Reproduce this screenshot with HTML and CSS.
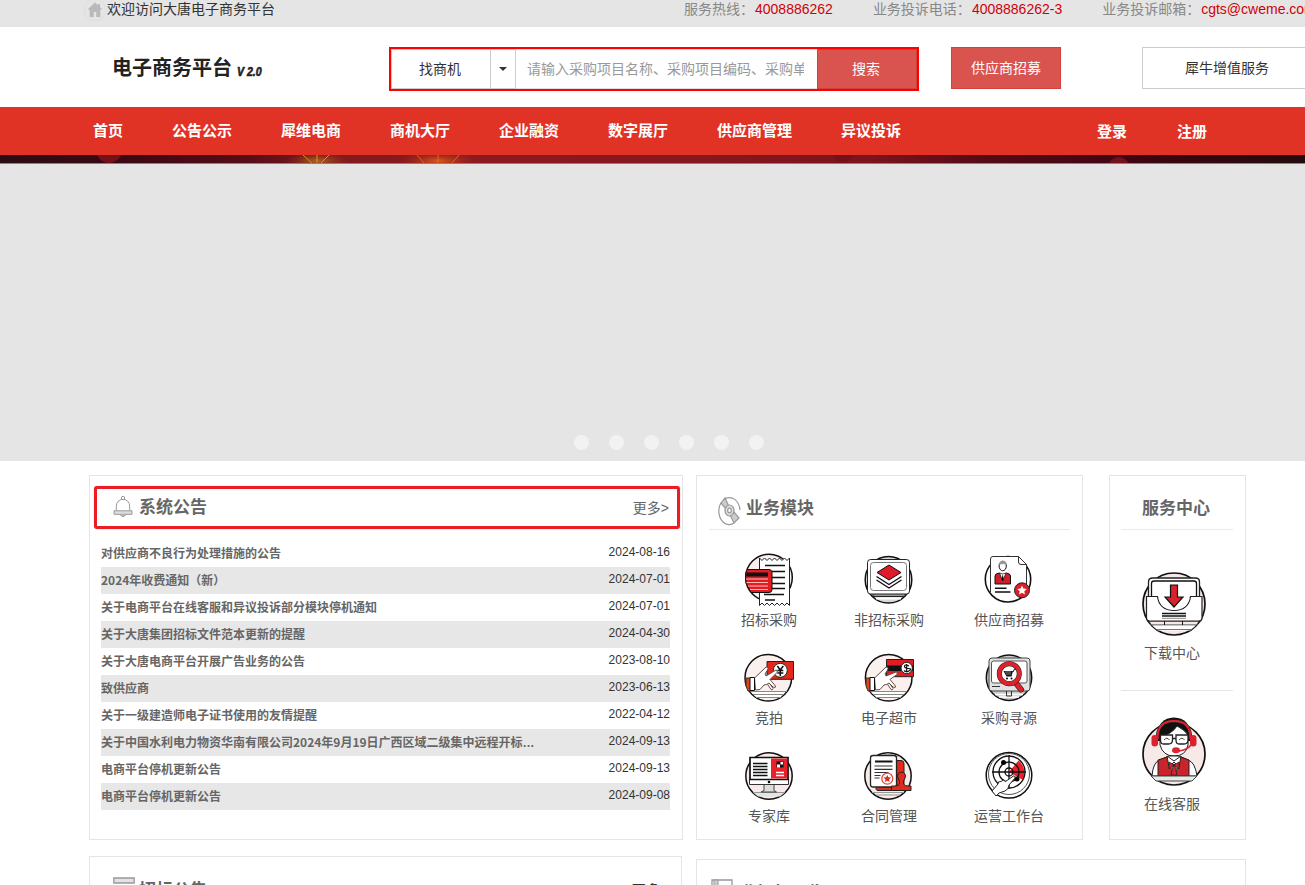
FILE: index.html
```html
<!DOCTYPE html>
<html lang="zh-CN">
<head>
<meta charset="utf-8">
<title>电子商务平台</title>
<link rel="stylesheet" href="styles.css">
</head>
<body>
<div class="topbar">
  <div class="welcome">
    <svg class="home" width="24" height="24" viewBox="0 0 24 24"><circle cx="12" cy="12" r="11" fill="none" stroke="#dedede"/><path d="M12 4.500 4.500 11.500h2.200V19h4v-5h2.600v5h4v-7.500h2.200L17 9V6h-2v1.300z" fill="#b9b9b9"/></svg>
    <span>欢迎访问大唐电子商务平台</span>
  </div>
  <div class="contacts">
    <span>服务热线：<b>4008886262</b></span>
    <span>业务投诉电话：<b>4008886262-3</b></span>
    <span>业务投诉邮箱：<b>cgts@cweme.com</b></span>
  </div>
</div>

<header class="header">
  <div class="logo"><span>电子商务平台</span><em>V 2.0</em></div>
  <div class="search">
    <div class="search-type">找商机</div>
    <div class="search-caret"><i></i></div>
    <div class="search-input"><span>请输入采购项目名称、采购项目编码、采购单位</span></div>
    <div class="search-btn">搜索</div>
  </div>
  <div class="recruit">供应商招募</div>
  <div class="extra">犀牛增值服务</div>
</header>

<nav class="nav">
  <div class="nav-links"><a>首页</a><a>公告公示</a><a>犀维电商</a><a>商机大厅</a><a>企业融资</a><a>数字展厅</a><a>供应商管理</a><a>异议投诉</a></div>
  <div class="nav-user"><a>登录</a><a>注册</a></div>
</nav>

<section class="banner">
  <svg class="banner-art" width="1305" height="9" viewBox="0 0 1305 9">
    <defs>
      <linearGradient id="bg"><stop offset="0" stop-color="#2b0c13"/><stop offset=".1" stop-color="#3c0813"/><stop offset=".19" stop-color="#570d17"/><stop offset=".25" stop-color="#7e1a1d"/><stop offset=".35" stop-color="#8c1a20"/><stop offset=".55" stop-color="#84171f"/><stop offset=".67" stop-color="#7a141d"/><stop offset=".75" stop-color="#560b16"/><stop offset=".88" stop-color="#3c0510"/><stop offset="1" stop-color="#240b0e"/></linearGradient>
      <radialGradient id="y"><stop offset="0" stop-color="#d29a20"/><stop offset="1" stop-color="#a04018" stop-opacity="0"/></radialGradient>
      <radialGradient id="o"><stop offset="0" stop-color="#f06a18"/><stop offset="1" stop-color="#b02a18" stop-opacity="0"/></radialGradient>
    </defs>
    <path d="M0 0h1305v9H0z" fill="url(#bg)"/>
    <path d="M97 0h24q-4 8-12 8T97 0M833 0h20q-4 9-10 9t-10-9M1108 9q10-14 22 0" fill="#74121a"/>
    <ellipse cx="317" cy="6" rx="32" ry="9" fill="url(#y)" opacity=".6"/>
    <path d="m303 0 10 9m4-9v9m12-9-9 9" stroke="#c79a22"/>
    <ellipse cx="438" cy="6" rx="38" ry="10" fill="url(#o)" opacity=".8"/>
    <path d="m417 0 8 9m13-9v9m21-9-8 9" stroke="#e06418"/>
    <path d="M0 8h1305v1H0z" fill="#9a7b80"/>
  </svg>
  <div class="dots"><i></i><i></i><i></i><i></i><i></i><i></i></div>
</section>

<main class="row">
  <section class="panel notices">
    <div class="notice-head">
      <svg width="22" height="24" viewBox="0 0 22 24" fill="none" stroke="#999"><circle cx="11" cy="3" r="1.700"/><path d="M4.300 15.500V11a6.700 6.700 0 0 1 13.400 0v4.500"/><path d="M2 15.800h18v3.500H2z" fill="#ddd"/><path d="M8 19.500q3 4 6 0" fill="#bbb"/></svg>
      <h2>系统公告</h2><a>更多&gt;</a>
    </div>
    <ul>
      <li><b>对供应商不良行为处理措施的公告</b><time>2024-08-16</time></li>
      <li><b>2024年收费通知（新）</b><time>2024-07-01</time></li>
      <li><b>关于电商平台在线客服和异议投诉部分模块停机通知</b><time>2024-07-01</time></li>
      <li><b>关于大唐集团招标文件范本更新的提醒</b><time>2024-04-30</time></li>
      <li><b>关于大唐电商平台开展广告业务的公告</b><time>2023-08-10</time></li>
      <li><b>致供应商</b><time>2023-06-13</time></li>
      <li><b>关于一级建造师电子证书使用的友情提醒</b><time>2022-04-12</time></li>
      <li><b>关于中国水利电力物资华南有限公司2024年9月19日广西区域二级集中远程开标<span class="dots-end">…</span></b><time>2024-09-13</time></li>
      <li><b>电商平台停机更新公告</b><time>2024-09-13</time></li>
      <li><b>电商平台停机更新公告</b><time>2024-09-08</time></li>
    </ul>
  </section>

  <section class="panel modules">
    <div class="panel-head">
      <svg width="24" height="32" viewBox="0 0 24 32" fill="none" stroke="#999" stroke-width="1.200"><path d="M3.500 7C-.5 13 0 22 5 27c3 3 8 3.500 11 1M7 3.500C14 .5 21 5 22 15"/><path d="m3 8 4-5 4 8.500-3 2.500zM12 20l4-3 5 6-5 5z" fill="#ccc"/><ellipse cx="11.500" cy="15.500" rx="4.500" ry="5.500" fill="#ddd"/><ellipse cx="11.500" cy="15.500" rx="1.800" ry="2.300" fill="#fff"/></svg>
      <h2>业务模块</h2>
    </div>
    <div class="grid">
      <div class="cell">
        <svg viewBox="0 0 60 60"><circle cx="30" cy="29.500" r="23.300" fill="#f8eeec" stroke="#111" stroke-width="1.500"/><path d="m20.500 10 2.500 2.500 2.500-2.500 2.500 2.500 2.500-2.500 2.500 2.500 2.500-2.500 2.500 2.500 2.500-2.500 2.500 2.500 2.500-2.500 2.500 2.500 2.500-2.500v47.500l-2.500-2.500-2.500 2.500-2.500-2.500-2.500 2.500-2.500-2.500-2.500 2.500-2.500-2.500-2.500 2.500-2.500-2.500-2.500 2.500-2.500-2.500-2.500 2.500z" fill="#fff" stroke="#222"/><path d="M26 17.500h20M33 23.500h13M33 29.500h13M33 35.500h13M33 40.500h13M25 46.500h20M26 52h10" stroke="#111" stroke-width="1.300"/><path d="M8 21.500h22q3 0 3 3v17q0 3-3 3H12L7 35l-.5-9z" fill="#e31b23" stroke="#111"/><path d="M7.500 24.500H29v4H7z" fill="#111"/><path d="M7 31h22M7.500 34.500H29M9 38h20M11 41.500h18" stroke="#fbb"/></svg>
        <span>招标采购</span>
      </div>
      <div class="cell">
        <svg viewBox="0 0 60 60"><circle cx="29.500" cy="31.700" r="23.300" fill="#d8d8d8" stroke="#111" stroke-width="1.500"/><path d="M17 50.500h25" stroke="#fff" stroke-width="2"/><path d="M14 45.500h32v3H14z" fill="#999" stroke="#222"/><rect x="8.500" y="11.500" width="42" height="34.500" rx="3" fill="#fff" stroke="#222"/><rect x="11.500" y="14.500" width="36" height="28" rx="3" fill="#fff" stroke="#777"/><path d="m30 17 12 7.500L30 32l-12-7.500z" fill="#df1a2a" stroke="#111"/><path d="m17.500 28.500 12.500 8 12.500-8M17.500 32l12.500 8 12.500-8" fill="none" stroke="#111" stroke-width="1.300"/></svg>
        <span>非招标采购</span>
      </div>
      <div class="cell">
        <svg viewBox="0 0 60 60"><circle cx="29" cy="31.300" r="22.700" fill="#fff" stroke="#111" stroke-width="1.600"/><path d="M14 8.500h25.500l8 8V44M11.500 44V11q0-2.500 2.500-2.500" fill="#fff" stroke="#333"/><path d="M12 11h27l8 6v25H12z" fill="#fff"/><path d="M39.500 8.500V14q0 2.500 2.500 2.500h5.500z" fill="#fff" stroke="#333"/><ellipse cx="23.700" cy="18" rx="3.600" ry="4.800" fill="#fff" stroke="#111"/><path d="M20 17q0-4 4-4t3.500 4q-3-2-7.500 0" fill="#999"/><path d="M16 36v-8q0-2.500 4-3l3.700 2 3.700-2q4.100.5 4.100 3v8z" fill="#d21c28" stroke="#111"/><path d="m20.500 25 3.200 8 3.300-8-3.300 1z" fill="#fff" stroke="#111" stroke-width=".7"/><path d="m23.700 26 1 5-1 2-1-2z"/><path d="M16 40.300h11.500M16 44h15.500" stroke="#111" stroke-width="1.500"/><circle cx="43" cy="42.300" r="7.500" fill="#d9202b" stroke="#222"/><path d="m43 37.500 1.400 3 3.300.4-2.400 2.300.6 3.200-2.900-1.600-2.900 1.600.6-3.200-2.400-2.300 3.300-.4z" fill="#fff"/></svg>
        <span>供应商招募</span>
      </div>
      <div class="cell">
        <svg viewBox="0 0 60 60"><circle cx="29.300" cy="31.700" r="23.300" fill="#faf1ef" stroke="#111" stroke-width="1.500"/><path d="M12 46h34l-5 6H18z" fill="#fff"/><path d="M11 45.500h37M14 48.500h31M18 51.500h23" stroke="#888"/><path d="M28 15.500h26.500v17.800H28z" fill="#e4271b" stroke="#222"/><circle cx="41.300" cy="24.300" r="7" fill="#fff" stroke="#222"/><path d="m38.300 20 3 4 3-4m-3 4v6m-3-5.500h6M38.300 27h6" fill="none" stroke="#111" stroke-width="1.500"/><path d="m27 36 5 7.500q1.500 1 2-1l-4-6" fill="#fff" stroke="#6b4a45"/><path d="M15.500 32 27 21q3 0 1.500 3l-2.500 4 1 2 10-6q2 0 1 2.500l-7 7 5.500 6.500q.5 2.500-2.500 1l-4-4q-2 2-5 2l-4 4.500-4.500.5z" fill="#fff" stroke="#6b4a45"/><path d="M7 32h5v13H9l-2-5z" fill="#e8401c" stroke="#333"/><path d="M11 31.500h4.500v13H11z" fill="#fff" stroke="#111"/></svg>
        <span>竞拍</span>
      </div>
      <div class="cell">
        <svg viewBox="0 0 60 60"><circle cx="29.700" cy="31.700" r="23.300" fill="#faf1ef" stroke="#111" stroke-width="1.500"/><path d="M12 46h34l-5 6H18z" fill="#fff"/><path d="M11 45.500h37M14 48.500h31M18 51.500h23" stroke="#888"/><path d="M27.500 13.500h27v17.200h-27z" fill="#e31b23" stroke="#222"/><path d="M27.500 19.500h27v5.500h-27z" fill="#111"/><circle cx="47.700" cy="22" r="5.700" fill="#fff" stroke="#222"/><path d="M50 20q-4-2-4.500 0t4 2.500-.5 3q-2.500.5-4-1M47.700 18v8.500" fill="none" stroke="#111" stroke-width="1.200"/><path d="m27 36 5 7.500q1.500 1 2-1l-4-6" fill="#fff" stroke="#6b4a45"/><path d="M15.500 32 27 21q3 0 1.500 3l-2.500 4 1 2 10-4q2 0 1 2.500l-7 5 5.500 6.500q.5 2.500-2.500 1l-4-4q-2 2-5 2l-4 4.500-4.500.5z" fill="#fff" stroke="#6b4a45"/><path d="M7 32h5v13H9l-2-5z" fill="#e8401c" stroke="#333"/><path d="M11 31.500h4.500v13H11z" fill="#fff" stroke="#111"/></svg>
        <span>电子超市</span>
      </div>
      <div class="cell">
        <svg viewBox="0 0 60 60"><circle cx="30" cy="31.700" r="22.700" fill="#ccc" stroke="#111" stroke-width="1.500"/><path d="M16 48.500h28M20 51h20" stroke="#fff" stroke-width="1.500"/><rect x="10" y="12" width="41" height="33" rx="3" fill="#e2e2e2" stroke="#444"/><rect x="12.500" y="15" width="35.500" height="22" rx="2" fill="#fff" stroke="#555"/><path d="M13 40.500h8M27.500 45v5h5v-5" fill="none" stroke="#333"/><path d="m36 36 6 7.500" stroke="#222" stroke-width="6" stroke-linecap="round"/><path d="m36 36 6 7.500" stroke="#e0212b" stroke-width="4.800" stroke-linecap="round"/><circle cx="30.300" cy="27.700" r="10" fill="#fff" stroke="#222" stroke-width="5"/><circle cx="30.300" cy="27.700" r="10" fill="none" stroke="#e0212b" stroke-width="4"/><path d="M24.500 25h9.500l-1.500 5.500h-5z" fill="#111"/><path d="M26 26h6M27 28h5" stroke="#fff" stroke-width=".5"/><path d="M34 26l1.500-3H37" fill="none" stroke="#111"/><circle cx="28" cy="32.500" r="1"/><circle cx="32.500" cy="32.500" r="1"/></svg>
        <span>采购寻源</span>
      </div>
      <div class="cell">
        <svg viewBox="0 0 60 60"><circle cx="30" cy="32" r="23.200" fill="#f8eae8" stroke="#111" stroke-width="1.500"/><path d="M14 48.500h32l-5 4H19z" fill="#e4e4e4"/><path d="M14 48.500h32" stroke="#999"/><path d="M25 40v6.500l-3 1.500h15.500L35 46.500V40z" fill="#ddd" stroke="#444"/><path d="M10.500 35h39v5.500h-39z" fill="#fff" stroke="#333"/><path d="M11 13.500h38v22H11z" fill="#fff" stroke="#111" stroke-width="1.700"/><path d="M32 14.500h16v20H32z" fill="#e6212a"/><path d="M14 19.500h14.500M14 22.500h14.500M14 25.500h14.500M14 28.500h14.500M14 31.500h14.500" stroke="#111" stroke-width="1.300"/><path d="M37.500 17.500h7v6h-7z" fill="#111"/><path d="M38 20.500h3v3h-3zM41.500 18h2.500v2.500h-2.500z" fill="#fff"/><path d="M37 28.500h8M37 31.500h8" stroke="#fff" stroke-width="1.300"/><circle cx="30" cy="38" r="1.300"/></svg>
        <span>专家库</span>
      </div>
      <div class="cell">
        <svg viewBox="0 0 60 60"><circle cx="29" cy="32" r="23.200" fill="#f8eae8" stroke="#111" stroke-width="1.500"/><path d="M17 13q12-7 24 0z" fill="#bbb"/><path d="M13 48.500h32M17 51h24" stroke="#999"/><path d="M36 16.500h6q3 0 3 3V43H36zM17.500 42H40v4.500H19q-3 0-1.500-4.500" fill="#e02a1c" stroke="#222"/><rect x="11.500" y="11.500" width="26" height="31.500" rx="2.500" fill="#fff" stroke="#222" stroke-width="1.300"/><path d="M16 17.500h17.500" stroke="#111" stroke-width="2"/><path d="M15.500 22h18M15.500 25.300h18M15.500 28.500h14M15.500 31.500h6M15.500 34h5" stroke="#333" stroke-width="1.200"/><circle cx="28.300" cy="34.700" r="5.500" fill="#fff" stroke="#e4483c" stroke-width="1.300"/><path d="m28.300 31 1.100 2.300 2.600.3-1.900 1.800.5 2.600-2.300-1.300-2.300 1.300.5-2.600-1.900-1.800 2.600-.3z" fill="#e02a1c"/><path d="M39 34a4 4 0 1 1 7 0l-1.500 3v3q1 2 5 2h2.500v4.500H32.500V42h3q4 0 5-2v-3z" fill="#e02a1c" stroke="#222"/></svg>
        <span>合同管理</span>
      </div>
      <div class="cell">
        <svg viewBox="0 0 60 60"><circle cx="30" cy="31.300" r="22.800" fill="#fff" stroke="#111" stroke-width="1.500"/><circle cx="30" cy="30" r="20.500" fill="#fff" stroke="#555"/><path d="m30 28 9.500-11.500A16 16 0 0 1 44 36z" fill="#ea202a"/><g fill="none" stroke="#111" stroke-width="1.300"><circle cx="30" cy="28" r="16"/><circle cx="30" cy="28" r="10"/><circle cx="30" cy="28" r="4"/><path d="M30 11v34M13 28h34"/></g><circle cx="24.500" cy="18.500" r="2.500"/><circle cx="38" cy="35" r="2.500"/><path d="m13 47 6-7q-.5-3 3-2.500 2-3 4.500 0l8-5.500q2.500 0 1.500 2L30 41q0 4-4 6l-6 2-3 3z" fill="#fff" stroke="#222"/></svg>
        <span>运营工作台</span>
      </div>
    </div>
  </section>

  <section class="panel service">
    <div class="panel-head"><h2>服务中心</h2></div>
    <div class="svc">
      <svg width="70" height="72" viewBox="0 0 70 72"><circle cx="35" cy="37" r="31" fill="#f5e8e6" stroke="#111" stroke-width="1.700"/><path d="M9.500 30V15q0-4 4-4h43q4 0 4 4v15z" fill="#fff" stroke="#222" stroke-width="1.300"/><path d="M12.500 30V16.500q0-2.500 2.500-2.500h40q2.500 0 2.500 2.500V30" fill="#fff" stroke="#111" stroke-width="1.300"/><path d="M10 54h50l-2 4H12z" fill="#f5ebe6" stroke="#333"/><path d="M25.500 54v4M43.500 54v4" stroke="#111"/><path d="M13 58.500h44l-6 5H19z" fill="#fff"/><path d="M18 62.500h34" stroke="#777"/><path d="M7.500 29.500h11q2 14 16.500 14t16.500-14h11.500V51q0 3-3 3H10.500q-3 0-3-3z" fill="#fff" stroke="#222" stroke-width="1.200"/><path d="M19.200 29.500q2 13.200 15.800 13.200t15.800-13.200z" fill="#fff"/><path d="M31.500 18h7v12h5.500l-9 10-9-10h5.500z" fill="#d9222d" stroke="#111" stroke-width="1.200"/><path d="M23 46.500h24M23 49h24" stroke="#111" stroke-width="1.700"/><path d="M23 51.300h24" stroke="#888" stroke-width="1"/></svg>
      <span>下载中心</span>
    </div>
    <div class="svc">
      <svg width="70" height="72" viewBox="0 0 70 72"><circle cx="35" cy="39" r="31" fill="#f6e9e8" stroke="#111" stroke-width="1.700"/><path d="M19 20q0-17 16-17.500Q51 3 51 20v6H19z" fill="#111"/><path d="M21 22q12-3 17-11 8 4 11 9v10q-2 11-14 11-11 0-14-11z" fill="#fff" stroke="#222"/><path d="M18.500 24Q18 6 35 6t16.500 18" fill="none" stroke="#222" stroke-width="3.300"/><path d="M18.500 24Q18 6 35 6t16.500 18" fill="none" stroke="#dc2530" stroke-width="2.200"/><rect x="12.500" y="20" width="6.500" height="11.500" rx="3.200" fill="#d9222d"/><rect x="51" y="20" width="6.500" height="11.500" rx="3.200" fill="#d9222d"/><path d="M21.500 20h12v5q0 4-4 4h-5q-3 0-3-4zM37 20h12v5q0 4-4 4h-5q-3 0-3-4zM33.500 23.500H37" fill="#fff" stroke="#222" stroke-width="1.300"/><path d="M25 25q3-3.500 5.500 0M40 25q3-3.500 5.500 0" fill="none" stroke="#444"/><path d="M52 30q-4 5-12 6" fill="none" stroke="#dc2530" stroke-width="1.700"/><ellipse cx="37" cy="35.300" rx="4" ry="3" fill="#dc2530"/><path d="M13 61q1-14 8-16l9-4h10l9 4q7 2 9 16z" fill="#fff" stroke="#222"/><path d="m19 45 9-3 7 8 7-8 8 3v16H19z" fill="#c9232c" stroke="#222"/><path d="m28 41 2 11 5-5 5 5 2-11-7 5z" fill="#fff" stroke="#222"/><path d="M31.500 51 35 61l3.500-10z" fill="#fff" stroke="#333" stroke-width=".7"/><path d="m35 50-5-3v7zm0 0 5-3v7zm-3 10 2-9h2l2 9z" fill="#d9222d" stroke="#222" stroke-width=".8"/><path d="M12 61h46l-5 5H17z" fill="#e4eae4" stroke="#444"/></svg>
      <span>在线客服</span>
    </div>
  </section>
</main>

<div class="row lower">
  <section class="panel bid">
    <svg width="22" height="22" viewBox="0 0 22 22"><path d="M.8 1h20.400v5H.8z" fill="#e2e2e2" stroke="#999" stroke-width="1.300"/><path d="M3 9h16v11H3z" fill="#e2e2e2" stroke="#999" stroke-width="1.300"/></svg>
    <h2>招标公告</h2><a>更多&gt;</a>
  </section>
  <section class="panel nonbid">
    <svg width="22" height="22" viewBox="0 0 22 22"><path d="M1 1h20v20H1z" fill="#fff" stroke="#999" stroke-width="1.300"/><path d="M3 1h4v20H3z" fill="#ccc" stroke="#999"/></svg>
    <h2>非招标公告</h2>
  </section>
</div>
</body>
</html>
```

FILE: styles.css
```css
* { box-sizing: border-box; }
body {
  margin: 0;
  height: 885px;
  overflow: hidden;
  background: #fff;
  color: #333;
  font: 14px/18px "Liberation Sans", "Noto Sans CJK SC", sans-serif;
  white-space: nowrap;
}
h2 { margin: 0; font-size: 17px; line-height: 28px; color: #666; }
svg { display: block; flex: none; }

.topbar {
  display: flex;
  height: 27px;
  padding-left: 83px;
  background: #e5e5e5;
  overflow: hidden;
}
.welcome { display: flex; flex: none; width: 601px; color: #333; }
.home { margin: -2px 0 0; }
.contacts { display: flex; flex: none; gap: 40px; color: #888; }
.contacts span { display: flex; }
.contacts b { margin-left: 1px; font-weight: 400; color: #d0000a; }

.header { display: flex; height: 80px; padding: 20px 0 0 112px; overflow: hidden; }
.logo { display: flex; width: 277px; flex: none; color: #222; font-weight: 700; }
.logo span { font-size: 20px; line-height: 42px; }
.logo em {
  margin: 16px 0 0 5px;
  font-size: 12px;
  line-height: 18px;
  -webkit-text-stroke: .6px #222;
  transform: scaleX(.88);
  transform-origin: left;
}
.search { display: flex; flex: none; width: 530px; height: 44px; border: 2px solid #f00; line-height: 38px; }
.search-type { width: 100px; padding-right: 2px; border: 1px solid #ccc; text-align: center; }
.search-caret {
  display: flex;
  align-items: center;
  justify-content: center;
  width: 25px;
  border: 1px solid #ccc;
  border-left: 0;
}
.search-caret i { border: 4px solid transparent; border-top-color: #333; border-bottom: 0; }
.search-input { width: 301px; padding: 0 13px 0 11px; border-top: 1px solid #ddd; border-bottom: 1px solid #ddd; color: #999; }
.search-input span { display: block; overflow: hidden; }
.search-btn { width: 100px; padding-right: 2px; background: #d9534f; border: 1px solid #d43f3a; color: #fff; text-align: center; }
.recruit, .extra { flex: none; height: 42px; line-height: 40px; text-align: center; }
.recruit { width: 110px; margin-left: 32px; background: #d9534f; border: 1px solid #d43f3a; color: #fff; }
.extra { width: 170px; margin-left: 81px; border: 1px solid #ccc; }

.nav {
  display: flex;
  height: 48px;
  padding-left: 93px;
  background: #e13226;
  color: #fff;
  font-size: 15px;
  font-weight: 700;
  line-height: 48px;
}
.nav-links { display: flex; gap: 49px; width: 1004px; }
.nav-user { display: flex; gap: 50px; line-height: 50px; }

.banner {
  display: flex;
  flex-direction: column;
  justify-content: space-between;
  height: 306px;
  padding-bottom: 11px;
  background: #e5e5e5;
}
.dots { display: flex; gap: 20px; padding-left: 574px; }
.dots i { width: 15px; height: 15px; border-radius: 50%; background: #f2f2f2; }

.row { display: flex; padding: 14px 0 0 89px; }
.panel { flex: none; border: 1px solid #e5e5e5; background: #fff; }
.row .notices { width: 594px; height: 365px; padding: 10px 2px 0 4px; }
.notice-head {
  display: flex;
  align-items: center;
  height: 43px;
  padding: 0 8px 0 15px;
  border: 3px solid #ed1c24;
  border-radius: 3px;
  box-shadow: 0 0 1px #f66;
}
.notice-head svg { margin-top: -1px; }
.notice-head h2 { flex: 1; margin: 1px 0 0 5px; }
.notice-head a { margin-top: 1px; color: #666; }
.notices ul { margin: 11px 10px 0 7px; padding: 0; list-style: none; }
.notices li { display: flex; justify-content: space-between; height: 27px; font-size: 12px; }
.notices li:nth-child(even) { background: #e7e7e7; }
.notices li b { color: #666; font-family: "Noto Sans CJK SC", sans-serif; line-height: 25px; }
.notices .dots-end { font-family: "Liberation Sans", sans-serif; }
.notices time { line-height: 24px; }

.modules { width: 387px; height: 365px; margin-left: 13px; padding: 0 12px; }
.panel-head { display: flex; height: 54px; padding: 19px 0 0 9px; border-bottom: 1px solid #eaeaea; }
.panel-head h2 { margin-left: 4px; }
.grid { display: grid; grid-template-columns: repeat(3, 120px); grid-auto-rows: 98px; margin-top: 18px; }
.cell { display: flex; flex-direction: column; align-items: center; color: #555; line-height: 24px; }
.cell svg { width: 60px; height: 60px; }

.service { width: 137px; height: 365px; margin-left: 26px; padding: 0 12px 0 11px; }
.service .panel-head { padding-left: 17px; }
.svc {
  display: flex;
  flex-direction: column;
  align-items: flex-start;
  height: 160px;
  padding: 37px 0 0 18px;
  color: #555;
}
.svc + .svc { height: 140px; padding-top: 24px; border-top: 1px solid #e5e5e5; }
.svc span { margin: 5px 0 0 5px; }
.svc + .svc span { margin-top: 8px; }

.lower { padding-top: 16px; align-items: flex-start; }
.lower .panel { display: flex; height: 120px; }
.bid { width: 593px; padding: 20px 13px 0 23px; }
.bid h2 { flex: 1; margin-left: 4px; }
.bid a { line-height: 27px; color: #333; }
.nonbid { width: 550px; margin: 3px 0 0 14px; padding: 19px 0 0 14px; }
.nonbid h2 { margin-left: 7px; line-height: 29px; }
```
